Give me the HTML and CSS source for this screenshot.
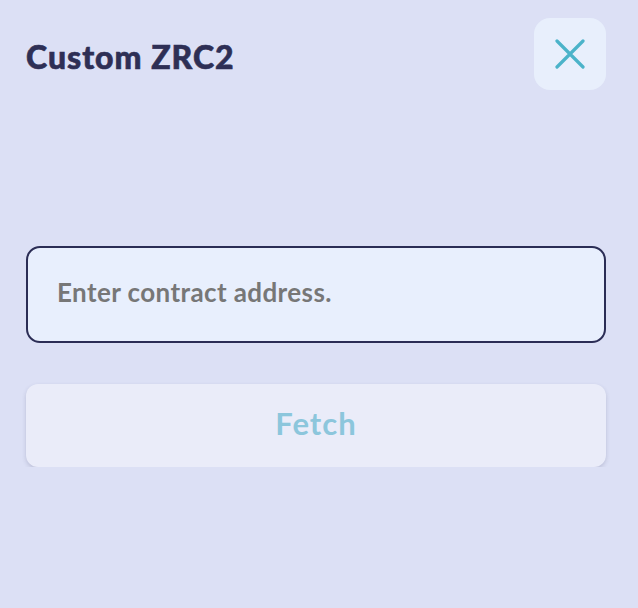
FILE: index.html
```html
<!DOCTYPE html>
<html>
<head>
<meta charset="utf-8">
<link rel="stylesheet" href="styles.css">
</head>
<body>
<div class="panel">
  <header class="header">
    <h1 class="title">Custom ZRC2</h1>
    <button class="close" aria-label="Close">
      <svg width="30" height="30" viewBox="0 0 30 30"><path d="M2 2 L28 28 M28 2 L2 28" stroke="#4bb3c9" stroke-width="3.2" stroke-linecap="round" fill="none"/></svg>
    </button>
  </header>
  <div class="field">
    <input class="input" type="text" placeholder="Enter contract address.">
  </div>
  <button class="fetch">Fetch</button>
</div>
</body>
</html>
```
FILE: styles.css
```css
html, body {
  margin: 0;
  padding: 0;
  background: #dce0f5;
  font-family: Lato, "Noto Sans", sans-serif;
}
.panel {
  padding: 18px 32px 0 26px;
  display: flex;
  flex-direction: column;
}
.header {
  display: flex;
  justify-content: space-between;
  align-items: center;
  height: 72px;
}
.title {
  margin: 0;
  padding-top: 4px;
  font-size: 32px;
  font-weight: 900;
  color: #2e2f55;
  letter-spacing: 1px;
  -webkit-text-stroke: 0.6px #2e2f55;
}
.close {
  width: 72px;
  height: 72px;
  border: none;
  border-radius: 16px;
  background: #e8effc;
  display: flex;
  align-items: center;
  justify-content: center;
  padding: 0;
}
.field {
  margin-top: 156px;
}
.input {
  box-sizing: border-box;
  width: 100%;
  height: 97px;
  border: 2px solid #2b2d55;
  border-radius: 14px;
  background: #e8effd;
  padding: 0 29px 5px;
  font-family: Lato, "Noto Sans", sans-serif;
  font-size: 26px;
  font-weight: 700;
  letter-spacing: 0.4px;
  color: #333;
  outline: none;
}
.input::placeholder {
  color: #777777;
}
.fetch {
  margin-top: 41px;
  height: 83px;
  border: none;
  border-radius: 12px;
  background: #eaecf9;
  box-shadow: 0 2px 4px rgba(60, 60, 100, 0.2);
  padding: 0 0 6px;
  font-family: Lato, "Noto Sans", sans-serif;
  font-size: 31px;
  font-weight: 700;
  letter-spacing: 1px;
  color: #8cc6dc;
}
```
